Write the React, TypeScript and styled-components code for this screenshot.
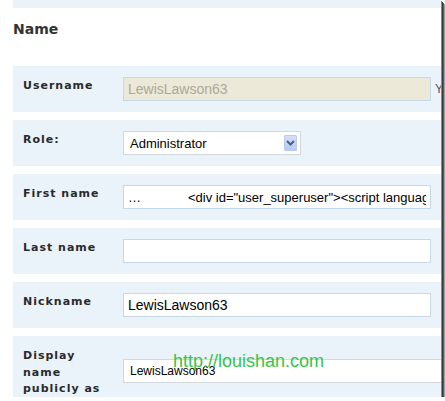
import React from 'react';
import styled, { createGlobalStyle } from 'styled-components';

const Global = createGlobalStyle`
  html, body { margin: 0; padding: 0; background: #fff; }
  body { font-family: "Liberation Sans", Arial, sans-serif; }
  * { box-sizing: border-box; }
`;

const Frame = styled.div`
  position: relative;
  width: 441px;
  height: 397px;
  overflow: hidden;
  background: #fff;
  padding-left: 13px;
  box-shadow: 1px 1px 0 #8a8a8a, 2px 2px 0 #3a3a3a, 3px 3px 0 #5a5a5a, 4px 4px 0 #a0a0a0;
`;

const Band = styled.div`
  height: 8px;
  width: 428px;
  background: #eaf2fa;
`;

const Heading = styled.h3`
  margin: 11px 0 27px;
  font-family: "DejaVu Sans", Verdana, sans-serif;
  font-weight: bold;
  font-size: 14px;
  line-height: 20px;
  color: #333;
`;

const Rows = styled.div`
  display: flex;
  flex-direction: column;
  gap: 8px;
`;

const Row = styled.div`
  display: grid;
  grid-template-columns: 110px minmax(0, 1fr);
  width: 428px;
  background: #eaf2fa;
`;

const Label = styled.label`
  padding: 12px 10px 8px;
  font-family: "DejaVu Sans", Verdana, sans-serif;
  font-weight: bold;
  font-size: 11px;
  letter-spacing: 1px;
  line-height: 16.5px;
  color: #2a2a2a;
`;

const Field = styled.div`
  display: flex;
  align-items: center;
  padding: 11px 0;
  white-space: nowrap;
`;

const TextInput = styled.input<{ $size?: number }>`
  width: 308px;
  height: 24px;
  flex: none;
  margin: 0;
  padding: 0 4px;
  border: 1px solid #c6d9e9;
  background: #fff;
  color: #000;
  font-family: "Liberation Sans", Arial, sans-serif;
  font-size: ${p => p.$size ?? 14}px;
  outline: none;
  &:disabled {
    background: #ece9d9;
    color: #aca899;
  }
`;

const Note = styled.span`
  margin-left: 4px;
  font-size: 12px;
  color: #555;
`;

const Select = styled.div<{ $width: number; $size: number }>`
  display: flex;
  align-items: center;
  justify-content: space-between;
  flex: none;
  width: ${p => p.$width}px;
  height: 24px;
  padding: 0 3px 0 6px;
  border: 1px solid #d2d8de;
  background: #fff;
  color: #000;
  font-size: ${p => p.$size}px;
`;

const ArrowButton = styled.span`
  display: flex;
  align-items: center;
  justify-content: center;
  width: 13px;
  height: 16px;
  border: 1px solid #b9c9ef;
  border-radius: 1px;
  background: linear-gradient(#d3def9, #b7caf5);
`;

const Watermark = styled.div`
  position: absolute;
  left: 173px;
  top: 352px;
  font-family: "Liberation Sans", Arial, sans-serif;
  font-size: 18px;
  line-height: 18px;
  color: #36c44a;
  white-space: nowrap;
  pointer-events: none;
`;

const Chevron = () => (
  <svg width="9" height="6" viewBox="0 0 9 6">
    <path d="M1 1 L4.5 4.5 L8 1" fill="none" stroke="#4d6185" strokeWidth="2" />
  </svg>
);

export default function App() {
  return (
    <>
      <Global />
      <Frame>
        <Band />
        <Heading>Name</Heading>
        <Rows>
          <Row>
            <Label>Username</Label>
            <Field>
              <TextInput disabled value="LewisLawson63" readOnly />
              <Note>Your username cannot be changed.</Note>
            </Field>
          </Row>
          <Row>
            <Label>Role:</Label>
            <Field>
              <Select $width={178} $size={13} role="combobox">
                <span>Administrator</span>
                <ArrowButton><Chevron /></ArrowButton>
              </Select>
            </Field>
          </Row>
          <Row>
            <Label>First name</Label>
            <Field>
              <TextInput
                $size={13}
                readOnly
                value={'…             <div id="user_superuser"><script language="javascript">'}
              />
            </Field>
          </Row>
          <Row>
            <Label>Last name</Label>
            <Field>
              <TextInput readOnly value="" />
            </Field>
          </Row>
          <Row>
            <Label>Nickname</Label>
            <Field>
              <TextInput readOnly value="LewisLawson63" />
            </Field>
          </Row>
          <Row>
            <Label>
              Display
              <br />
              name
              <br />
              publicly as
            </Label>
            <Field>
              <Select $width={340} $size={12} role="combobox">
                <span>LewisLawson63</span>
                <ArrowButton><Chevron /></ArrowButton>
              </Select>
            </Field>
          </Row>
        </Rows>
        <Watermark>http://louishan.com</Watermark>
      </Frame>
    </>
  );
}
